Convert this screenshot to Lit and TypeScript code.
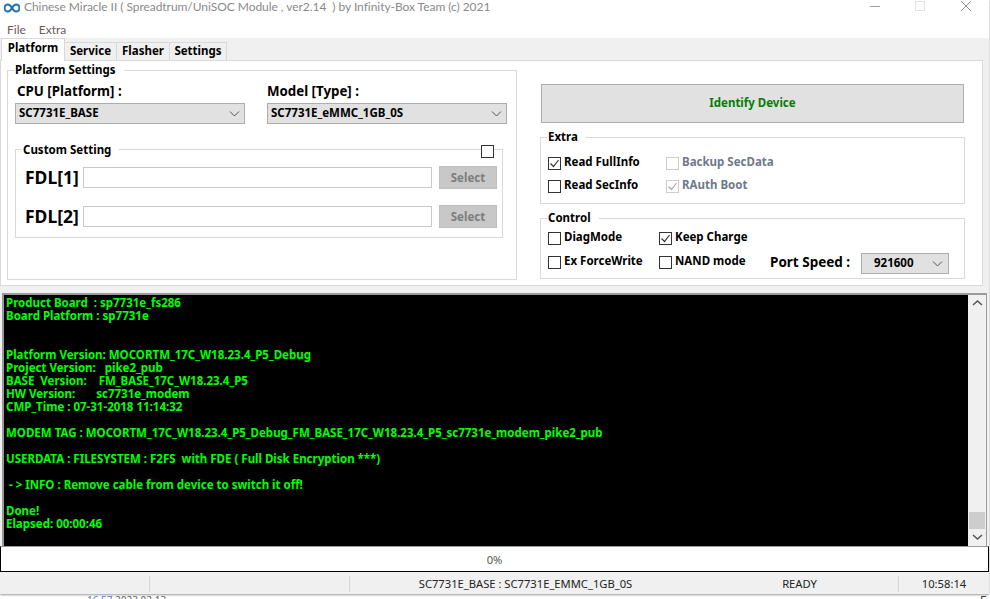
import { LitElement, html, css, svg } from "lit";
import { customElement } from "lit/decorators.js";

const LOG = [
  "Product Board  : sp7731e_fs286",
  "Board Platform : sp7731e",
  "",
  "",
  "Platform Version: MOCORTM_17C_W18.23.4_P5_Debug",
  "Project Version:   pike2_pub",
  "BASE  Version:    FM_BASE_17C_W18.23.4_P5",
  "HW Version:       sc7731e_modem",
  "CMP_Time : 07-31-2018 11:14:32",
  "",
  "MODEM TAG : MOCORTM_17C_W18.23.4_P5_Debug_FM_BASE_17C_W18.23.4_P5_sc7731e_modem_pike2_pub",
  "",
  "USERDATA : FILESYSTEM : F2FS  with FDE ( Full Disk Encryption ***)",
  "",
  " - > INFO : Remove cable from device to switch it off!",
  "",
  "Done!",
  "Elapsed: 00:00:46",
];

const chev = svg`<svg width="11" height="6" viewBox="0 0 11 6"><path d="M1 .5 5.500 5 10 .5" fill="none" stroke="#555" stroke-width="1"/></svg>`;

@customElement("app-root")
export class AppRoot extends LitElement {
  static styles = css`
    :host { display: block; width: 990px; height: 599px; overflow: hidden; background: #fff; position: relative;
      font-family: "Noto Sans", sans-serif; font-size: 11.500px; font-weight: 700; color: #000; }
    * { box-sizing: border-box; }
    .win { width: 989px; height: 594px; display: flex; flex-direction: column; background: #f0f0f0; box-shadow: 0 1px 2px #999; position: relative; z-index: 1; }
    .title { height: 20px; background: #fff; display: flex; align-items: flex-start; padding: 1px 0 0 4px; flex: none; position: relative; }
    .title > svg { margin-top: 2px; }
    .title-text { font: 400 12px/12px Lato, sans-serif; letter-spacing: -.05px; color: #8a8a8a; margin-left: 4px; white-space: pre; }
    .wc { position: absolute; top: 0; left: 870px; display: flex; }
    .menu { height: 18px; background: #fff; display: flex; gap: 13px; padding: 0 7px; align-items: center; flex: none; font: 400 12px Lato, sans-serif; color: #6b5a5a; }
    .tabs { height: 22px; display: flex; align-items: flex-end; padding-left: 1px; flex: none; }
    .tab { width: 53px; height: 18px; border: 1px solid #d9d9d9; border-bottom: 0; background: #f0f0f0; display: flex; align-items: center; justify-content: center; margin-right: -1px; padding-bottom: 2px; }
    .tab.on { width: 64px; height: 23px; background: #fff; margin-bottom: -1px; position: relative; z-index: 1; padding-bottom: 5px; }
    .tab.w3 { width: 54px; }
    .tab.w4 { width: 58px; }
    .panel { height: 226px; margin-right: 6px; flex: none; background: #fff; border: 1px solid #d9d9d9; display: flex; padding: 9px 17px 0 6px; }
    .left { width: 510px; height: 210px; border: 1px solid #d9d9d9; position: relative; flex: none; padding: 10px 8px 0 7px; }
    .legend { position: absolute; top: -8px; left: 6px; background: #fff; padding: 0 8px 0 1px; line-height: 13px; white-space: nowrap; }
    .custom .legend { top: -7px; }
    .left > .legend { top: -8px; }
    .fields { display: grid; grid-template-columns: 230px 240px; column-gap: 22px; }
    .lbl { font-size: 13.300px; line-height: 16px; margin: 2px 0 4px 2px; }
    .lbl.m { margin-left: 0; }
    .combo { height: 21px; background: #e1e1e1; border: 1px solid #adadad; display: flex; align-items: center; justify-content: space-between; padding: 0 4px 2px 3px; }
    .combo svg, .pcombo svg { margin-top: 2px; }
    .custom { margin: 25px 0 0 0; width: 488px; height: 89px; border: 1px solid #d9d9d9; position: relative; padding: 14px 5px 0 9px; }
    .custom .cb { position: absolute; right: 8px; top: -5px; margin: 0; }
    .fdl { display: flex; align-items: center; height: 26px; margin-bottom: 13px; }
    .fdl b { font-size: 17.500px; width: 58px; font-weight: 700; }
    .input { width: 349px; height: 21px; border: 1px solid #c8c8c8; background: #fff; }
    .select { margin-left: 7px; width: 58px; height: 23px; background: #c8c8c8; border: 1px solid #c0c0c0; color: #7d7d7d; display: flex; align-items: center; justify-content: center; }
    .right { margin-left: 23px; flex: 1; display: flex; flex-direction: column; padding-top: 14px; }
    .identify { height: 39px; margin: 0 1px; background: #e1e1e1; border: 1px solid #adadad; color: #008000; display: flex; align-items: center; justify-content: center; flex: none; padding-bottom: 2px; }
    .box { border: 1px solid #d9d9d9; position: relative; flex: none; }
    .extra { margin-top: 14px; height: 67px; }
    .control { margin-top: 14px; height: 61px; }
    .row { display: flex; align-items: center; position: absolute; white-space: nowrap; line-height: 16px; }
    .row span:last-child { margin-top: -2px; }
    .cb { width: 13px; height: 13px; border: 1px solid #333; background: #fff; display: inline-flex; flex: none; margin-right: 3px; }
    .cb.dis { border-color: #ccc; }
    .cb svg { display: block; }
    .dim { color: #6d7a8a; }
    .port { font-size: 13.500px; position: absolute; left: 229px; top: 35px; line-height: 16px; white-space: nowrap; }
    .pcombo { position: absolute; left: 320px; top: 34px; width: 88px; height: 21px; background: #e1e1e1; border: 1px solid #adadad; display: flex; align-items: center; justify-content: space-between; padding: 0 5px 2px 12px; }
    .console { height: 253px; margin: 7px 2px 0 2px; flex: none; display: flex; border: 2px solid #9a9a9a; border-width: 2px 1px 0 2px; background: #000; }
    .log { flex: 1; padding: 1px 0 0 2px; color: #00ff00; line-height: 13px; white-space: pre; overflow: hidden; }
    .sb { width: 18px; background: #f0f0f0; position: relative; flex: none; }
    .sb .thumb { position: absolute; left: 1px; right: 1px; top: 217px; height: 17px; background: #cdcdcd; }
    .sb svg { position: absolute; left: 4px; }
    .progress { height: 26px; flex: none; border: 1px solid #000; border-top-color: #9a9a9a; background: #fff; display: flex; align-items: center; justify-content: center; font: 400 11.200px "Noto Sans", sans-serif; color: #555; }
    .status { flex: 1; display: flex; align-items: center; font: 400 11.200px "Noto Sans", sans-serif; color: #222; padding-top: 1px; }
    .cell { height: 16px; display: flex; align-items: center; justify-content: center; flex: none; }
    .cell.sep { border-right: 1px solid #d5d5d5; }
    .c1 { width: 150px; }
    .c2 { width: 200px; }
    .c3 { width: 351px; }
    .c4 { width: 198px; }
    .c5 { width: 90px; }
    .under { position: absolute; left: 87px; top: 593px; font: 400 10px "Open Sans", sans-serif; color: #555; white-space: pre; }
    .under span { color: #4a78c0; }
    .edge { position: absolute; left: 980px; top: 592px; font: 400 12px "Open Sans", sans-serif; color: #333; }
  `;

  private check(on: boolean, dis = false) {
    return html`<span class="cb ${dis ? "dis" : ""}">${on
      ? svg`<svg width="11" height="11" viewBox="0 0 11 11"><path d="M1.500 5.500 4.500 8.500 9.500 2" fill="none" stroke="${dis ? "#aaa" : "#333"}" stroke-width="1.200"/></svg>`
      : ""}</span>`;
  }

  private opt(x: number, y: number, label: string, on = false, dis = false) {
    return html`<div class="row ${dis ? "dim" : ""}" style="left:${x}px;top:${y}px">${this.check(on, dis)}<span>${label}</span></div>`;
  }

  render() {
    return html`
      <div class="win">
        <div class="title">
          <svg width="16" height="10" viewBox="0 0 16 10"><path d="M8 5C6.500 2.500 5.500 1.500 4 1.500a3.500 3.500 0 0 0 0 7C5.500 8.500 6.500 7.500 8 5c1.500-2.500 2.500-3.500 4-3.500a3.500 3.500 0 0 1 0 7C10.500 8.500 9.500 7.500 8 5Z" fill="none" stroke="#1c6fb8" stroke-width="2"/></svg>
          <span class="title-text">Chinese Miracle II ( Spreadtrum/UniSOC Module , ver2.14  ) by Infinity-Box Team (c) 2021</span>
          <div class="wc">
            <svg width="110" height="14" viewBox="0 0 110 14"><path d="M0 6.500H10" stroke="#a0a0a0"/><rect x="45.500" y="1.500" width="9" height="9" fill="none" stroke="#e2e2e2"/><path d="M91 1 101 11M101 1 91 11" stroke="#909090"/></svg>
          </div>
        </div>
        <div class="menu"><span>File</span><span>Extra</span></div>
        <div class="tabs">
          <div class="tab on">Platform</div><div class="tab">Service</div><div class="tab w3">Flasher</div><div class="tab w4">Settings</div>
        </div>
        <div class="panel">
          <div class="left">
            <div class="legend">Platform Settings</div>
            <div class="fields">
              <div><div class="lbl">CPU [Platform] :</div><div class="combo"><span>SC7731E_BASE</span>${chev}</div></div>
              <div><div class="lbl m">Model [Type] :</div><div class="combo"><span>SC7731E_eMMC_1GB_0S</span>${chev}</div></div>
            </div>
            <div class="custom">
              <div class="legend">Custom Setting</div>
              ${this.check(false)}
              <div class="fdl"><b>FDL[1]</b><div class="input"></div><div class="select">Select</div></div>
              <div class="fdl"><b>FDL[2]</b><div class="input"></div><div class="select">Select</div></div>
            </div>
          </div>
          <div class="right">
            <div class="identify">Identify Device</div>
            <div class="box extra">
              <div class="legend">Extra</div>
              ${this.opt(7, 18, "Read FullInfo", true)}
              ${this.opt(7, 41, "Read SecInfo")}
              ${this.opt(125, 18, "Backup SecData", false, true)}
              ${this.opt(125, 41, "RAuth Boot", true, true)}
            </div>
            <div class="box control">
              <div class="legend">Control</div>
              ${this.opt(7, 12, "DiagMode")}
              ${this.opt(7, 36, "Ex ForceWrite")}
              ${this.opt(118, 12, "Keep Charge", true)}
              ${this.opt(118, 36, "NAND mode")}
              <div class="port">Port Speed :</div>
              <div class="pcombo"><span>921600</span>${chev}</div>
            </div>
          </div>
        </div>
        <div class="console">
          <div class="log">${LOG.join("\n")}</div>
          <div class="sb">
            <svg style="top:5px" width="11" height="6" viewBox="0 0 11 6"><path d="M1 5 5.500 1 10 5" fill="none" stroke="#555" stroke-width="1.500"/></svg>
            <div class="thumb"></div>
            <svg style="top:239px" width="11" height="6" viewBox="0 0 11 6"><path d="M1 1 5.500 5 10 1" fill="none" stroke="#555" stroke-width="1.500"/></svg>
          </div>
        </div>
        <div class="progress">0%</div>
        <div class="status">
          <div class="cell c1 sep"></div>
          <div class="cell c2 sep"></div>
          <div class="cell c3">SC7731E_BASE : SC7731E_EMMC_1GB_0S</div>
          <div class="cell c4 sep">READY</div>
          <div class="cell c5">10:58:14</div>
        </div>
      </div>
      <div class="under"><span>16.57</span> 2023.02.13</div>
      <div class="edge">E</div>
    `;
  }
}
